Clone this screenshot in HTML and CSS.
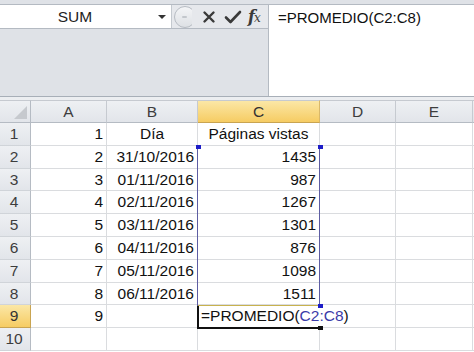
FILE: index.html
```html
<!DOCTYPE html>
<html>
<head>
<meta charset="utf-8">
<link rel="stylesheet" href="styles.css">
</head>
<body>
<div class="app">
  <div class="fbar">
    <div class="fleft">
      <div class="namerow">
        <div class="namebox"><span class="name">SUM</span><span class="arrow"></span></div>
        <div class="btns">
          <svg class="circ" width="20" height="24" viewBox="0 0 20 24">
            <defs><linearGradient id="g" x1="0" y1="0" x2="0" y2="1"><stop offset="0" stop-color="#f4f5f7"/><stop offset="1" stop-color="#dde0e4"/></linearGradient></defs>
            <circle cx="13" cy="12" r="10.5" fill="url(#g)" stroke="#b7bcc3" stroke-width="1"/>
            <rect x="10" y="11" width="5" height="2" rx="1" fill="#c3c7cc"/>
          </svg>
          <svg class="ico" width="14" height="14" viewBox="0 0 14 14"><path d="M2.5 2.5 L11.5 11.5 M11.5 2.5 L2.5 11.5" stroke="#3a3a3a" stroke-width="2.4" stroke-linecap="round" fill="none"/></svg>
          <svg class="ico" width="18" height="14" viewBox="0 0 18 14"><path d="M2 7.5 L6.5 12 L16 2" stroke="#3a3a3a" stroke-width="2.6" stroke-linejoin="round" stroke-linecap="round" fill="none"/></svg>
          <span class="fx">f<span class="fxx">x</span></span>
        </div>
      </div>
    </div>
    <div class="formula">=PROMEDIO(C2:C8)</div>
  </div>
  <div class="gap"></div>
  <div class="sheet">
    <div class="hd corner"><span class="tri"></span></div>
    <div class="hd col">A</div>
    <div class="hd col">B</div>
    <div class="hd col sel">C</div>
    <div class="hd col">D</div>
    <div class="hd col">E</div>
    <div class="hd col edge"></div>

    <div class="hd row">1</div><div class="c r">1</div><div class="c m">Día</div><div class="c m">Páginas vistas</div><div class="c"></div><div class="c"></div><div class="c edge"></div>
    <div class="hd row">2</div><div class="c r">2</div><div class="c r">31/10/2016</div><div class="c r">1435</div><div class="c"></div><div class="c"></div><div class="c edge"></div>
    <div class="hd row">3</div><div class="c r">3</div><div class="c r">01/11/2016</div><div class="c r">987</div><div class="c"></div><div class="c"></div><div class="c edge"></div>
    <div class="hd row">4</div><div class="c r">4</div><div class="c r">02/11/2016</div><div class="c r">1267</div><div class="c"></div><div class="c"></div><div class="c edge"></div>
    <div class="hd row">5</div><div class="c r">5</div><div class="c r">03/11/2016</div><div class="c r">1301</div><div class="c"></div><div class="c"></div><div class="c edge"></div>
    <div class="hd row">6</div><div class="c r">6</div><div class="c r">04/11/2016</div><div class="c r">876</div><div class="c"></div><div class="c"></div><div class="c edge"></div>
    <div class="hd row">7</div><div class="c r">7</div><div class="c r">05/11/2016</div><div class="c r">1098</div><div class="c"></div><div class="c"></div><div class="c edge"></div>
    <div class="hd row">8</div><div class="c r">8</div><div class="c r">06/11/2016</div><div class="c r">1511</div><div class="c"></div><div class="c"></div><div class="c edge"></div>
    <div class="hd row sel">9</div><div class="c r">9</div><div class="c"></div><div class="c active">=PROMEDIO(<span class="ref">C2:C8</span>)</div><div class="c nol"></div><div class="c"></div><div class="c edge"></div>
    <div class="hd row">10</div><div class="c"></div><div class="c"></div><div class="c"></div><div class="c"></div><div class="c"></div><div class="c edge"></div>

    <div class="rng-l"></div>
    <div class="rng-r"></div>
    <div class="h h1"></div>
    <div class="h h2"></div>
    <div class="h h3"></div>
    <div class="act-top"></div>
    <div class="act-l"></div>
    <div class="act-b"></div>
    <div class="h h4"></div>
  </div>
</div>
</body>
</html>
```

FILE: styles.css
```css
* { box-sizing: border-box; }
html, body { margin: 0; padding: 0; }
body {
  width: 474px;
  height: 352px;
  overflow: hidden;
  background: #ffffff;
  font-family: "Liberation Sans", Arial, sans-serif;
  color: #111;
}
.app { width: 474px; height: 352px; overflow: hidden; }

.fbar {
  display: flex;
  height: 97px;
  padding-top: 4px;
  background: #dfe2e7;
  border-bottom: 1px solid #a8afb8;
}
.fleft {
  width: 268px;
  flex: none;
}
.namerow {
  display: flex;
  height: 25px;
  border-top: 1px solid #b4bac2;
  border-bottom: 1px solid #b4bac2;
}
.namebox {
  width: 172px;
  background: #fff;
  border-right: 1px solid #c4c9cf;
  display: flex;
  align-items: center;
  position: relative;
}
.name {
  width: 150px;
  text-align: center;
  font-size: 15.5px;
  color: #222;
}
.arrow {
  margin-left: 8px;
  width: 0;
  height: 0;
  border-left: 4px solid transparent;
  border-right: 4px solid transparent;
  border-top: 4px solid #333;
}
.btns {
  flex: 1;
  display: flex;
  align-items: center;
  background: #e6e8ec;
}
.circ { margin-left: 0; }
.ico:nth-of-type(2) { margin-left: 10px; }
.ico:nth-of-type(3) { margin-left: 8px; }
.fx {
  margin-left: 6px;
  font-family: "DejaVu Serif", "Liberation Serif", serif;
  font-style: italic;
  font-weight: bold;
  font-size: 16px;
  color: #3a3a3a;
  letter-spacing: -1px;
}
.fxx { font-size: 12px; font-weight: normal; }
.formula {
  flex: 1;
  background: #fff;
  border-left: 1px solid #b4bac2;
  border-top: 1px solid #b4bac2;
  padding-left: 9px;
  font-size: 15px;
  line-height: 25px;
  color: #111;
}
.gap {
  height: 3px;
  background: #eceef1;
}

.sheet {
  position: relative;
  display: grid;
  grid-template-columns: 31px 76px 91px 122px 76px 77px 10px;
  grid-template-rows: 23px repeat(10, 22.8px);
  font-size: 15.5px;
}
.c {
  border-right: 1px solid #dadcdf;
  border-bottom: 1px solid #dadcdf;
  line-height: 22px;
  white-space: nowrap;
  padding: 0 3px;
  color: #111;
  overflow: visible;
}
.c.r { text-align: right; }
.c.m { text-align: center; }
.c.active {
  padding-left: 3px;
  position: relative;
  z-index: 2;
  overflow: visible;
  border-right-color: transparent;
}
.ref { color: #3b3ba8; }

.hd {
  background: linear-gradient(#eef0f3, #e2e5ea);
  border-right: 1px solid #c6cad0;
  border-bottom: 1px solid #b5bbc3;
  color: #3d3d3d;
  text-align: center;
  line-height: 22px;
  border-top: 1px solid #c6cad0;
}
.hd.row {
  border-top: none;
  border-bottom: 1px solid #d0d4d9;
  border-right: 1px solid #b5bbc3;
  text-align: center;
  padding-right: 2px;
}
.hd.sel {
  background: linear-gradient(#fbe7a6, #f6cc63);
  border-bottom-color: #c9a451;
  border-right-color: #d9b86a;
  color: #333;
}
.hd.row.sel { border-right-color: #c9a451; }
.corner {
  position: relative;
  border-right: 1px solid #b5bbc3;
}
.tri {
  position: absolute;
  right: 3px;
  bottom: 3px;
  width: 13px;
  height: 13px;
  background: #c6c9ce;
  clip-path: polygon(100% 0, 100% 100%, 0 100%);
}
.edge { border-right: none; }

.rng-l, .rng-r {
  position: absolute;
  top: 46px;
  width: 1px;
  height: 160px;
  background: #5d5da3;
  z-index: 3;
}
.rng-l { left: 197px; }
.rng-r { left: 319px; }
.h {
  position: absolute;
  width: 5px;
  height: 4px;
  background: #1d1dc7;
  z-index: 4;
}
.h1 { left: 196px; top: 45px; }
.h2 { left: 318px; top: 45px; }
.h3 { left: 318px; top: 204px; }
.act-top {
  position: absolute;
  left: 198px;
  top: 205px;
  width: 121px;
  height: 1px;
  background: #c8b24e;
  z-index: 3;
}
.act-l {
  position: absolute;
  left: 197px;
  top: 206px;
  width: 2px;
  height: 23px;
  background: #111;
  z-index: 3;
}
.act-b {
  position: absolute;
  left: 197px;
  top: 227px;
  width: 122px;
  height: 2px;
  background: #111;
  z-index: 3;
}
.h4 { left: 318px; top: 226px; width: 5px; height: 4px; background: #111; }
```
